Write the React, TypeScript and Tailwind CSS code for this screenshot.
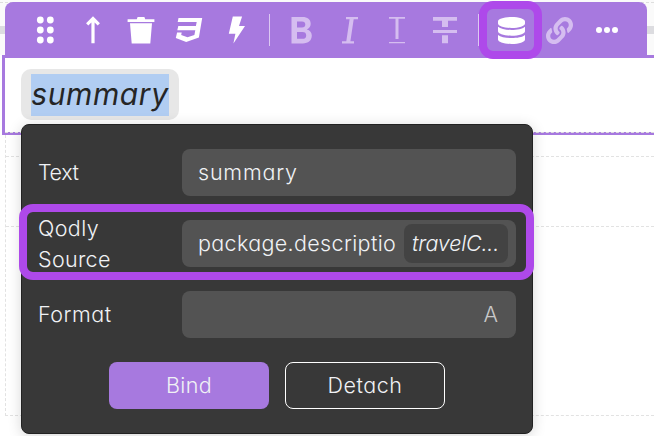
import type { ReactNode } from "react";
import { FaLink } from "react-icons/fa";

function Tool({ children, muted = false }: { children: ReactNode; muted?: boolean }) {
  return (
    <button className={`flex h-14 w-12 items-center justify-center ${muted ? "text-[#d5bdf0]" : "text-white"}`}>
      {children}
    </button>
  );
}

function Glyph({ children }: { children: ReactNode }) {
  return (
    <svg className="h-8 w-8" viewBox="0 0 32 32" fill="currentColor">
      {children}
    </svg>
  );
}

function Divider() {
  return (
    <div className="flex w-4 justify-center">
      <div className="h-8 w-px bg-[#dcc8f3]" />
    </div>
  );
}

function Toolbar() {
  return (
    <div className="relative z-10 ml-[5px] flex h-14 w-[642px] items-center rounded-t-lg bg-[#a779df] pl-4">
      <Tool>
        <Glyph>
          {[6, 16, 26].map((y) => (
            <g key={y}>
              <circle cx="11.3" cy={y} r="3.4" />
              <circle cx="21.3" cy={y} r="3.4" />
            </g>
          ))}
        </Glyph>
      </Tool>
      <Tool>
        <Glyph>
          <path d="M16 4v25.3M10.2 10.4 16 4.6l5.8 5.8" fill="none" stroke="currentColor" strokeWidth="3.2" />
        </Glyph>
      </Tool>
      <Tool>
        <Glyph>
          <path d="M2.6 5.2h9.2l.8-2.2h6.8l.8 2.2h9.2v2.7H2.600z M5 9.200h22L25.300 29.500H6.700z" />
        </Glyph>
      </Tool>
      <Tool>
        <Glyph>
          <path d="M5.500 4H29.200L25.900 23.600 13.200 28 2.800 24.100 4.100 18.500H8.700L8.200 20.900 14.500 23.300 21.400 20.900 22.300 16.300H4.300L5.300 12.100H22.900L23.700 8.100H4.700z" />
        </Glyph>
      </Tool>
      <Tool>
        <Glyph>
          <path d="M11.800 2.600h9.300L18 12h6L12.400 29.500l2-9.800H7.800z" />
        </Glyph>
      </Tool>
      <Divider />
      <Tool muted>
        <Glyph>
          <path
            fillRule="evenodd"
            d="M6.500 3h11c5 0 8.200 2.300 8.200 6.800 0 2.900-1.600 4.700-3.900 5.600 3.200.8 5 3 5 6.200 0 5-3.500 7.800-9 7.800H6.500zM12 7.500v6h5c2.200 0 3.300-1 3.300-3s-1.100-3-3.300-3zM12 18v6.800h5.500c2.500 0 3.700-1.200 3.700-3.400S20 18 17.500 18z"
          />
        </Glyph>
      </Tool>
      <Tool muted>
        <Glyph>
          <path d="M13 3h12v2.200h-4.300l-3.300 22H21v2.200H9v-2.200h4.300l3.300-22H13z" />
        </Glyph>
      </Tool>
      <Tool muted>
        <Glyph>
          <path d="M8 3h16v1.800h-6.500V25h-3V4.800H8zM8 28h16v1.300H8z" />
        </Glyph>
      </Tool>
      <Tool muted>
        <Glyph>
          <path d="M4 3h24v3.800h-9V13h-6V6.800H4zM4 16h24v3H4zM13 21.300h6v8h-6z" />
        </Glyph>
      </Tool>
      <div className="ml-px">
        <Divider />
      </div>
      <div className="relative ml-px">
        <Tool>
          <svg className="h-[27px] w-[27px]" viewBox="0 0 27 27" fill="currentColor">
            <path d="M0 4.500C0 2 6 0 13.500 0S27 2 27 4.500v2c0 2.500-6 4.500-13.500 4.500S0 9 0 6.500zM0 9.800C2.500 12 8 13 13.500 13S24.500 12 27 9.800v4.400c0 2.500-6 4.500-13.500 4.500S0 16.700 0 14.200zM0 18c2.500 2.200 8 3 13.500 3S24.500 20.200 27 18v4.500c0 2.500-6 4.500-13.500 4.500S0 25 0 22.500z" />
          </svg>
        </Tool>
        <div className="absolute -top-px -left-2 h-[58px] w-[63px] rounded-[14px] border-8 border-[#ae49ea]" />
      </div>
      <Tool muted>
        <FaLink className="h-[27px] w-[27px]" />
      </Tool>
      <Tool>
        <Glyph>
          <circle cx="8" cy="16" r="3" />
          <circle cx="16" cy="16" r="3" />
          <circle cx="24" cy="16" r="3" />
        </Glyph>
      </Tool>
    </div>
  );
}

function Field({ label, children }: { label: ReactNode; children?: ReactNode }) {
  return (
    <div className="flex h-[47px] items-center">
      <div className="w-36 shrink-0 leading-[31px]">{label}</div>
      <div className="flex h-full min-w-0 flex-1 items-center rounded-lg bg-[#535353] pl-4">{children}</div>
    </div>
  );
}

function BindingPanel() {
  return (
    <div className="absolute top-[124px] left-[21px] flex h-[310px] w-[512px] flex-col gap-6 rounded-lg border border-[#222] bg-[#383838] px-4 pt-6 text-[21.5px] font-[330] text-[#f0f2f5] shadow-[0_2px_14px_rgba(0,0,0,0.16)]">
      <Field label={<span className="tracking-[-0.4px]">Text</span>}>
        <span className="tracking-[0.8px]">summary</span>
      </Field>
      <div className="relative">
        <Field
          label={
            <>
              <span className="block tracking-[0.4px]">Qodly</span>
              <span className="block tracking-[0.3px]">Source</span>
            </>
          }
        >
          <span className="w-[198px] overflow-hidden tracking-[0.35px] whitespace-nowrap">package.description</span>
          <span className="ml-2 flex h-[39px] w-[104px] items-center rounded-lg bg-[#434343] pl-2 tracking-[-0.2px] whitespace-nowrap italic">
            travelC...
          </span>
        </Field>
        <div className="absolute -top-4 -left-[19px] h-[76px] w-[515px] rounded-[14px] border-8 border-[#ae49ea]" />
      </div>
      <Field label={<span className="tracking-[0.5px]">Format</span>}>
        <span className="mr-[18px] ml-auto text-[#c8c8c8]">A</span>
      </Field>
      <div className="flex h-[47px] justify-center gap-4">
        <button className="w-40 rounded-lg bg-[#a779df] tracking-[0.3px]">Bind</button>
        <button className="w-40 rounded-lg border border-white tracking-[0.5px]">Detach</button>
      </div>
    </div>
  );
}

export default function App() {
  return (
    <div className="relative h-[436px] w-[654px] overflow-hidden bg-white pt-[2px] font-['Inter',sans-serif] [font-feature-settings:'cv11','ss03']">
      <div className="absolute top-0 left-0 h-[55px] w-full bg-[#fafafa]">
        <div className="mt-[2px] border-t border-dashed border-[#dedede]" />
        <div className="mt-[23px] h-2 bg-[#dcdce0]" />
      </div>
      <Toolbar />
      <div className="relative -mt-[3px] ml-[2px] h-20 w-[670px] border-[3px] border-[#a779df] bg-white pt-[11px] pl-4">
        <div className="flex h-[51px] w-[158px] items-center justify-center rounded-[10px] bg-[#e7e7e7]">
          <span className="flex h-[42px] w-[138px] items-center justify-center bg-[#b1cdf2] pb-px text-[30px] tracking-[0.6px] whitespace-nowrap text-[#252525] italic">
            summary
          </span>
        </div>
        <div className="absolute right-0 -bottom-px left-0 border-t border-dashed border-[#dedede]" />
      </div>
      <div className="ml-[5px] h-[281px] border-b border-l border-dashed border-[#e2e2e2] pt-[21px]">
        <div className="h-[71px] border-y border-dashed border-[#e2e2e2]" />
      </div>
      <BindingPanel />
    </div>
  );
}
